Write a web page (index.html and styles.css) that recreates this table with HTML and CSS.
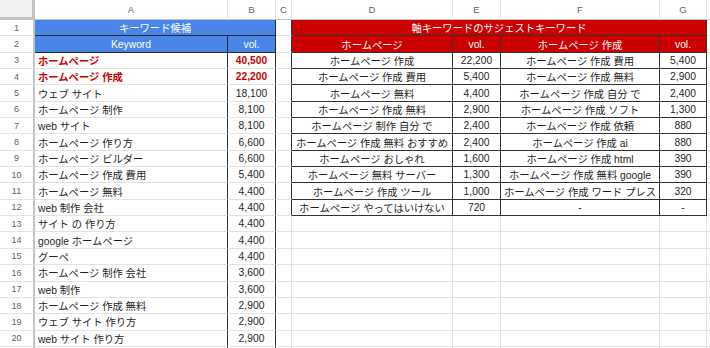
FILE: index.html
```html
<!DOCTYPE html>
<html lang="ja">
<head>
<meta charset="utf-8">
<link rel="stylesheet" href="styles.css">
</head>
<body>
<div class="sheet">
  <!-- column headers -->
  <div class="corner"></div>
  <div class="ch">A</div><div class="ch">B</div><div class="ch">C</div><div class="ch">D</div><div class="ch">E</div><div class="ch">F</div><div class="ch">G</div><div class="ch"></div>

  <!-- row 1 -->
  <div class="rh">1</div>
  <div class="c ctr blue span2 bdark">キーワード候補</div>
  <div class="c gap rdark"></div>
  <div class="c ctr red span4 bdark rdark">軸キーワードのサジェストキーワード</div>
  <div class="c"></div>

  <!-- row 2 -->
  <div class="rh">2</div>
  <div class="c ctr blue rdark bdark">Keyword</div>
  <div class="c ctr blue rdark bdark">vol.</div>
  <div class="c gap rdark"></div>
  <div class="c ctr red rdark bdark">ホームページ</div>
  <div class="c ctr red rdark bdark">vol.</div>
  <div class="c ctr red rdark bdark">ホームページ 作成</div>
  <div class="c ctr red rdark bdark">vol.</div>
  <div class="c"></div>

  <!-- row 3 -->
  <div class="rh">3</div>
  <div class="c kw rdark hot">ホームページ</div>
  <div class="c ctr rdark hot">40,500</div>
  <div class="c gap rdark"></div>
  <div class="c ctr rdark bdark">ホームページ 作成</div>
  <div class="c ctr rdark bdark">22,200</div>
  <div class="c ctr rdark bdark">ホームページ 作成 費用</div>
  <div class="c ctr rdark bdark">5,400</div>
  <div class="c"></div>

  <!-- row 4 -->
  <div class="rh">4</div>
  <div class="c kw rdark hot">ホームページ 作成</div>
  <div class="c ctr rdark hot">22,200</div>
  <div class="c gap rdark"></div>
  <div class="c ctr rdark bdark">ホームページ 作成 費用</div>
  <div class="c ctr rdark bdark">5,400</div>
  <div class="c ctr rdark bdark">ホームページ 作成 無料</div>
  <div class="c ctr rdark bdark">2,900</div>
  <div class="c"></div>

  <!-- row 5 -->
  <div class="rh">5</div>
  <div class="c kw rdark">ウェブ サイト</div>
  <div class="c ctr rdark">18,100</div>
  <div class="c gap rdark"></div>
  <div class="c ctr rdark bdark">ホームページ 無料</div>
  <div class="c ctr rdark bdark">4,400</div>
  <div class="c ctr rdark bdark">ホームページ 作成 自分 で</div>
  <div class="c ctr rdark bdark">2,400</div>
  <div class="c"></div>

  <!-- row 6 -->
  <div class="rh">6</div>
  <div class="c kw rdark">ホームページ 制作</div>
  <div class="c ctr rdark">8,100</div>
  <div class="c gap rdark"></div>
  <div class="c ctr rdark bdark">ホームページ 作成 無料</div>
  <div class="c ctr rdark bdark">2,900</div>
  <div class="c ctr rdark bdark">ホームページ 作成 ソフト</div>
  <div class="c ctr rdark bdark">1,300</div>
  <div class="c"></div>

  <!-- row 7 -->
  <div class="rh">7</div>
  <div class="c kw rdark">web サイト</div>
  <div class="c ctr rdark">8,100</div>
  <div class="c gap rdark"></div>
  <div class="c ctr rdark bdark">ホームページ 制作 自分 で</div>
  <div class="c ctr rdark bdark">2,400</div>
  <div class="c ctr rdark bdark">ホームページ 作成 依頼</div>
  <div class="c ctr rdark bdark">880</div>
  <div class="c"></div>

  <!-- row 8 -->
  <div class="rh">8</div>
  <div class="c kw rdark">ホームページ 作り方</div>
  <div class="c ctr rdark">6,600</div>
  <div class="c gap rdark"></div>
  <div class="c ctr rdark bdark">ホームページ 作成 無料 おすすめ</div>
  <div class="c ctr rdark bdark">2,400</div>
  <div class="c ctr rdark bdark">ホームページ 作成 ai</div>
  <div class="c ctr rdark bdark">880</div>
  <div class="c"></div>

  <!-- row 9 -->
  <div class="rh">9</div>
  <div class="c kw rdark">ホームページ ビルダー</div>
  <div class="c ctr rdark">6,600</div>
  <div class="c gap rdark"></div>
  <div class="c ctr rdark bdark">ホームページ おしゃれ</div>
  <div class="c ctr rdark bdark">1,600</div>
  <div class="c ctr rdark bdark">ホームページ 作成 html</div>
  <div class="c ctr rdark bdark">390</div>
  <div class="c"></div>

  <!-- row 10 -->
  <div class="rh">10</div>
  <div class="c kw rdark">ホームページ 作成 費用</div>
  <div class="c ctr rdark">5,400</div>
  <div class="c gap rdark"></div>
  <div class="c ctr rdark bdark">ホームページ 無料 サーバー</div>
  <div class="c ctr rdark bdark">1,300</div>
  <div class="c ctr rdark bdark">ホームページ 作成 無料 google</div>
  <div class="c ctr rdark bdark">390</div>
  <div class="c"></div>

  <!-- row 11 -->
  <div class="rh">11</div>
  <div class="c kw rdark">ホームページ 無料</div>
  <div class="c ctr rdark">4,400</div>
  <div class="c gap rdark"></div>
  <div class="c ctr rdark bdark">ホームページ 作成 ツール</div>
  <div class="c ctr rdark bdark">1,000</div>
  <div class="c ctr rdark bdark">ホームページ 作成 ワード プレス</div>
  <div class="c ctr rdark bdark">320</div>
  <div class="c"></div>

  <!-- row 12 -->
  <div class="rh">12</div>
  <div class="c kw rdark">web 制作 会社</div>
  <div class="c ctr rdark">4,400</div>
  <div class="c gap rdark"></div>
  <div class="c ctr rdark bdark">ホームページ やってはいけない</div>
  <div class="c ctr rdark bdark">720</div>
  <div class="c ctr rdark bdark">-</div>
  <div class="c ctr rdark bdark">-</div>
  <div class="c"></div>

  <!-- row 13 -->
  <div class="rh">13</div>
  <div class="c kw rdark">サイト の 作り方</div>
  <div class="c ctr rdark">4,400</div>
  <div class="c gap"></div><div class="c"></div><div class="c"></div><div class="c"></div><div class="c"></div><div class="c"></div>

  <!-- row 14 -->
  <div class="rh">14</div>
  <div class="c kw rdark">google ホームページ</div>
  <div class="c ctr rdark">4,400</div>
  <div class="c gap"></div><div class="c"></div><div class="c"></div><div class="c"></div><div class="c"></div><div class="c"></div>

  <!-- row 15 -->
  <div class="rh">15</div>
  <div class="c kw rdark">グーペ</div>
  <div class="c ctr rdark">4,400</div>
  <div class="c gap"></div><div class="c"></div><div class="c"></div><div class="c"></div><div class="c"></div><div class="c"></div>

  <!-- row 16 -->
  <div class="rh">16</div>
  <div class="c kw rdark">ホームページ 制作 会社</div>
  <div class="c ctr rdark">3,600</div>
  <div class="c gap"></div><div class="c"></div><div class="c"></div><div class="c"></div><div class="c"></div><div class="c"></div>

  <!-- row 17 -->
  <div class="rh">17</div>
  <div class="c kw rdark">web 制作</div>
  <div class="c ctr rdark">3,600</div>
  <div class="c gap"></div><div class="c"></div><div class="c"></div><div class="c"></div><div class="c"></div><div class="c"></div>

  <!-- row 18 -->
  <div class="rh">18</div>
  <div class="c kw rdark">ホームページ 作成 無料</div>
  <div class="c ctr rdark">2,900</div>
  <div class="c gap"></div><div class="c"></div><div class="c"></div><div class="c"></div><div class="c"></div><div class="c"></div>

  <!-- row 19 -->
  <div class="rh">19</div>
  <div class="c kw rdark">ウェブ サイト 作り方</div>
  <div class="c ctr rdark">2,900</div>
  <div class="c gap"></div><div class="c"></div><div class="c"></div><div class="c"></div><div class="c"></div><div class="c"></div>

  <!-- row 20 -->
  <div class="rh">20</div>
  <div class="c kw rdark">web サイト 作り方</div>
  <div class="c ctr rdark">2,900</div>
  <div class="c gap"></div><div class="c"></div><div class="c"></div><div class="c"></div><div class="c"></div><div class="c"></div>

  <!-- row 21 (cut off by window edge) -->
  <div class="rh"></div>
  <div class="c kw rdark"></div>
  <div class="c ctr rdark"></div>
  <div class="c gap"></div><div class="c"></div><div class="c"></div><div class="c"></div><div class="c"></div><div class="c"></div>
</div>
</body>
</html>
```

FILE: styles.css
```css
html, body {
  margin: 0;
  padding: 0;
  background: #ffffff;
  overflow: hidden;
}

.sheet {
  display: grid;
  grid-template-columns: 35px 193px 48px 16px 161px 48px 159px 47px 1fr;
  grid-template-rows: 20px;
  grid-auto-rows: 16.35px;
  width: 710px;
  font-family: "Liberation Sans", "Noto Sans CJK JP", sans-serif;
  font-size: 10.3px;
  color: #1f1f1f;
}

.sheet > div {
  box-sizing: border-box;
  border-right: 1px solid #e2e3e3;
  border-bottom: 1px solid #e2e3e3;
  overflow: hidden;
  white-space: nowrap;
}

.corner {
  background: #f1f1f1;
  border-right: 3px solid #c4c4c4 !important;
  border-bottom: 3px solid #c4c4c4 !important;
}

.ch {
  display: flex;
  align-items: center;
  justify-content: center;
  font-size: 9.5px;
  color: #5f6368;
  background: #ffffff;
  border-bottom-color: #c4c4c4 !important;
}

.rh {
  display: flex;
  align-items: center;
  justify-content: center;
  font-size: 9px;
  color: #5f6368;
  background: #ffffff;
  border-right: 2px solid #c4c4c4 !important;
}

.c {
  display: flex;
  align-items: center;
  padding: 0 3px;
}

.kw {
  justify-content: flex-start;
}

.ctr {
  justify-content: center;
}

.span2 {
  grid-column: span 2;
}

.span4 {
  grid-column: span 4;
}

.blue {
  background: #4a86e8;
  color: #ffffff;
}

.red {
  background: #cc0000;
  color: #ffffff;
}

.hot {
  color: #cc0000;
  font-weight: bold;
}

.sheet > .rdark {
  border-right-color: #333333;
}

.sheet > .bdark {
  border-bottom-color: #333333;
}

.blue.bdark,
.blue.rdark {
  border-color: #2a2a2a;
}
```
